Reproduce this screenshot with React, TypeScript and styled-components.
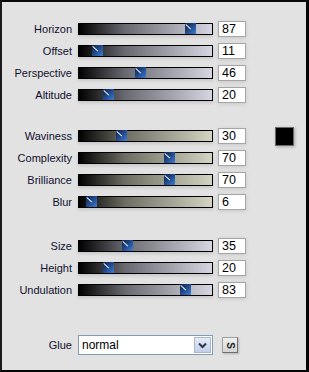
import styled, { createGlobalStyle } from 'styled-components';

const GlobalStyle = createGlobalStyle`
	html, body {
		margin: 0;
		padding: 0;
		background: #e2e2e2;
	}
	body {
		font-family: 'Liberation Sans', Arial, sans-serif;
	}
`;

const Frame = styled.div`
	width: 309px;
	height: 372px;
	box-sizing: border-box;
	background: #e2e2e2;
	border-top: 2px solid #0a0a0a;
	border-left: 2px solid #1a1a1a;
	border-right: 3px solid #050505;
	border-bottom: 2px solid #050505;
	padding: 14px 0 0 0;
	display: flex;
	flex-direction: column;
`;

const Group = styled.div<{ $top: number }>`
	display: flex;
	flex-direction: column;
	margin-top: ${p => p.$top}px;
`;

const Row = styled.div`
	display: grid;
	grid-template-columns: 71px 135px 28px 1fr;
	column-gap: 5px;
	align-items: center;
	height: 22px;
`;

const Label = styled.div`
	text-align: right;
	font-size: 11px;
	color: #10102e;
	white-space: nowrap;
	padding-right: 1px;
`;

const Track = styled.div<{ $tone: 'cool' | 'warm' }>`
	position: relative;
	height: 12px;
	box-sizing: border-box;
	border: 1px solid #000;
	background: linear-gradient(
		to right,
		#000 0%,
		${p => (p.$tone === 'warm' ? '#6e6e64' : '#6a6a72')} 35%,
		${p => (p.$tone === 'warm' ? '#d4d4c2' : '#d6d6e2')} 100%
	);
	box-shadow: 0 2px 3px rgba(0, 0, 0, 0.12);
`;

const Thumb = styled.div`
	position: absolute;
	top: -1px;
	width: 11px;
	height: 11px;
	background: linear-gradient(135deg, #10203e 0%, #1f4687 45%, #3f7fd2 100%);
	overflow: hidden;

	&::after {
		content: '';
		position: absolute;
		left: 1px;
		top: 1px;
		width: 7px;
		height: 1px;
		background: #f4f4f4;
		transform: rotate(42deg);
		transform-origin: 0 0;
	}
`;

const ValueBox = styled.div`
	height: 16px;
	box-sizing: border-box;
	border: 1px solid #a5a5a5;
	background: #fff;
	font-family: 'Liberation Sans Narrow', 'Liberation Sans', Arial, sans-serif;
	font-size: 12.5px;
	line-height: 14px;
	padding-left: 3px;
	color: #000;
	box-shadow: 0 1px 4px rgba(0, 0, 0, 0.12);
`;

const Swatch = styled.div`
	justify-self: start;
	margin-left: 24px;
	width: 19px;
	height: 19px;
	box-sizing: border-box;
	background: #000;
	border: 1px solid #6a6a6a;
	box-shadow: 1px 1px 3px rgba(0, 0, 0, 0.25);
`;

const GlueRow = styled.div`
	display: grid;
	grid-template-columns: 71px 135px 16px;
	column-gap: 5px;
	align-items: center;
	margin-top: 34px;
`;

const Select = styled.div`
	display: flex;
	align-items: stretch;
	height: 20px;
	box-sizing: border-box;
	border: 1px solid #7f9db9;
	background: #fff;
`;

const SelectText = styled.div`
	flex: 1;
	font-size: 12px;
	line-height: 18px;
	padding-left: 3px;
	color: #000;
`;

const DropButton = styled.div`
	width: 17px;
	margin: 1px;
	box-sizing: border-box;
	border: 1px solid #a9b8d0;
	background: linear-gradient(to bottom, #e4ebf7, #c2cfe5);
	display: flex;
	align-items: center;
	justify-content: center;
`;

const SideButton = styled.div`
	width: 16px;
	height: 16px;
	box-sizing: border-box;
	border: 1px solid #a0a0a0;
	border-right-color: #6e6e6e;
	border-bottom-color: #6e6e6e;
	background: linear-gradient(to bottom, #f0f0f0, #d4d4d4);
	display: flex;
	align-items: center;
	justify-content: center;
	box-shadow: 1px 1px 2px rgba(0, 0, 0, 0.2);
	margin-left: 4px;
`;

const SideGlyph = styled.span`
	display: inline-block;
	font-size: 10px;
	font-weight: bold;
	color: #222;
	transform: rotate(90deg);
`;

type Slider = { label: string; value: number };

const groups: { tone: 'cool' | 'warm'; top: number; rows: Slider[] }[] = [
	{
		tone: 'cool',
		top: 2,
		rows: [
			{ label: 'Horizon', value: 87 },
			{ label: 'Offset', value: 11 },
			{ label: 'Perspective', value: 46 },
			{ label: 'Altitude', value: 20 },
		],
	},
	{
		tone: 'warm',
		top: 19,
		rows: [
			{ label: 'Waviness', value: 30 },
			{ label: 'Complexity', value: 70 },
			{ label: 'Brilliance', value: 70 },
			{ label: 'Blur', value: 6 },
		],
	},
	{
		tone: 'cool',
		top: 22,
		rows: [
			{ label: 'Size', value: 35 },
			{ label: 'Height', value: 20 },
			{ label: 'Undulation', value: 83 },
		],
	},
];

const App = (): JSX.Element => {
	return (
		<>
			<GlobalStyle />
			<Frame>
				{groups.map((g, gi) => (
					<Group key={gi} $top={g.top}>
						{g.rows.map((r, ri) => (
							<Row key={r.label}>
								<Label>{r.label}</Label>
								<Track $tone={g.tone}>
									<Thumb style={{ left: (r.value / 100) * 122 }} />
								</Track>
								<ValueBox>{r.value}</ValueBox>
								{gi === 1 && ri === 0 ? <Swatch /> : <span />}
							</Row>
						))}
					</Group>
				))}
				<GlueRow>
					<Label>Glue</Label>
					<Select>
						<SelectText>normal</SelectText>
						<DropButton>
							<svg width="9" height="7" viewBox="0 0 9 7">
								<path d="M1 1.5 L4.5 5 L8 1.5" fill="none" stroke="#2a3550" strokeWidth="2" />
							</svg>
						</DropButton>
					</Select>
					<SideButton>
						<SideGlyph>S</SideGlyph>
					</SideButton>
				</GlueRow>
			</Frame>
		</>
	);
};

export default App;
